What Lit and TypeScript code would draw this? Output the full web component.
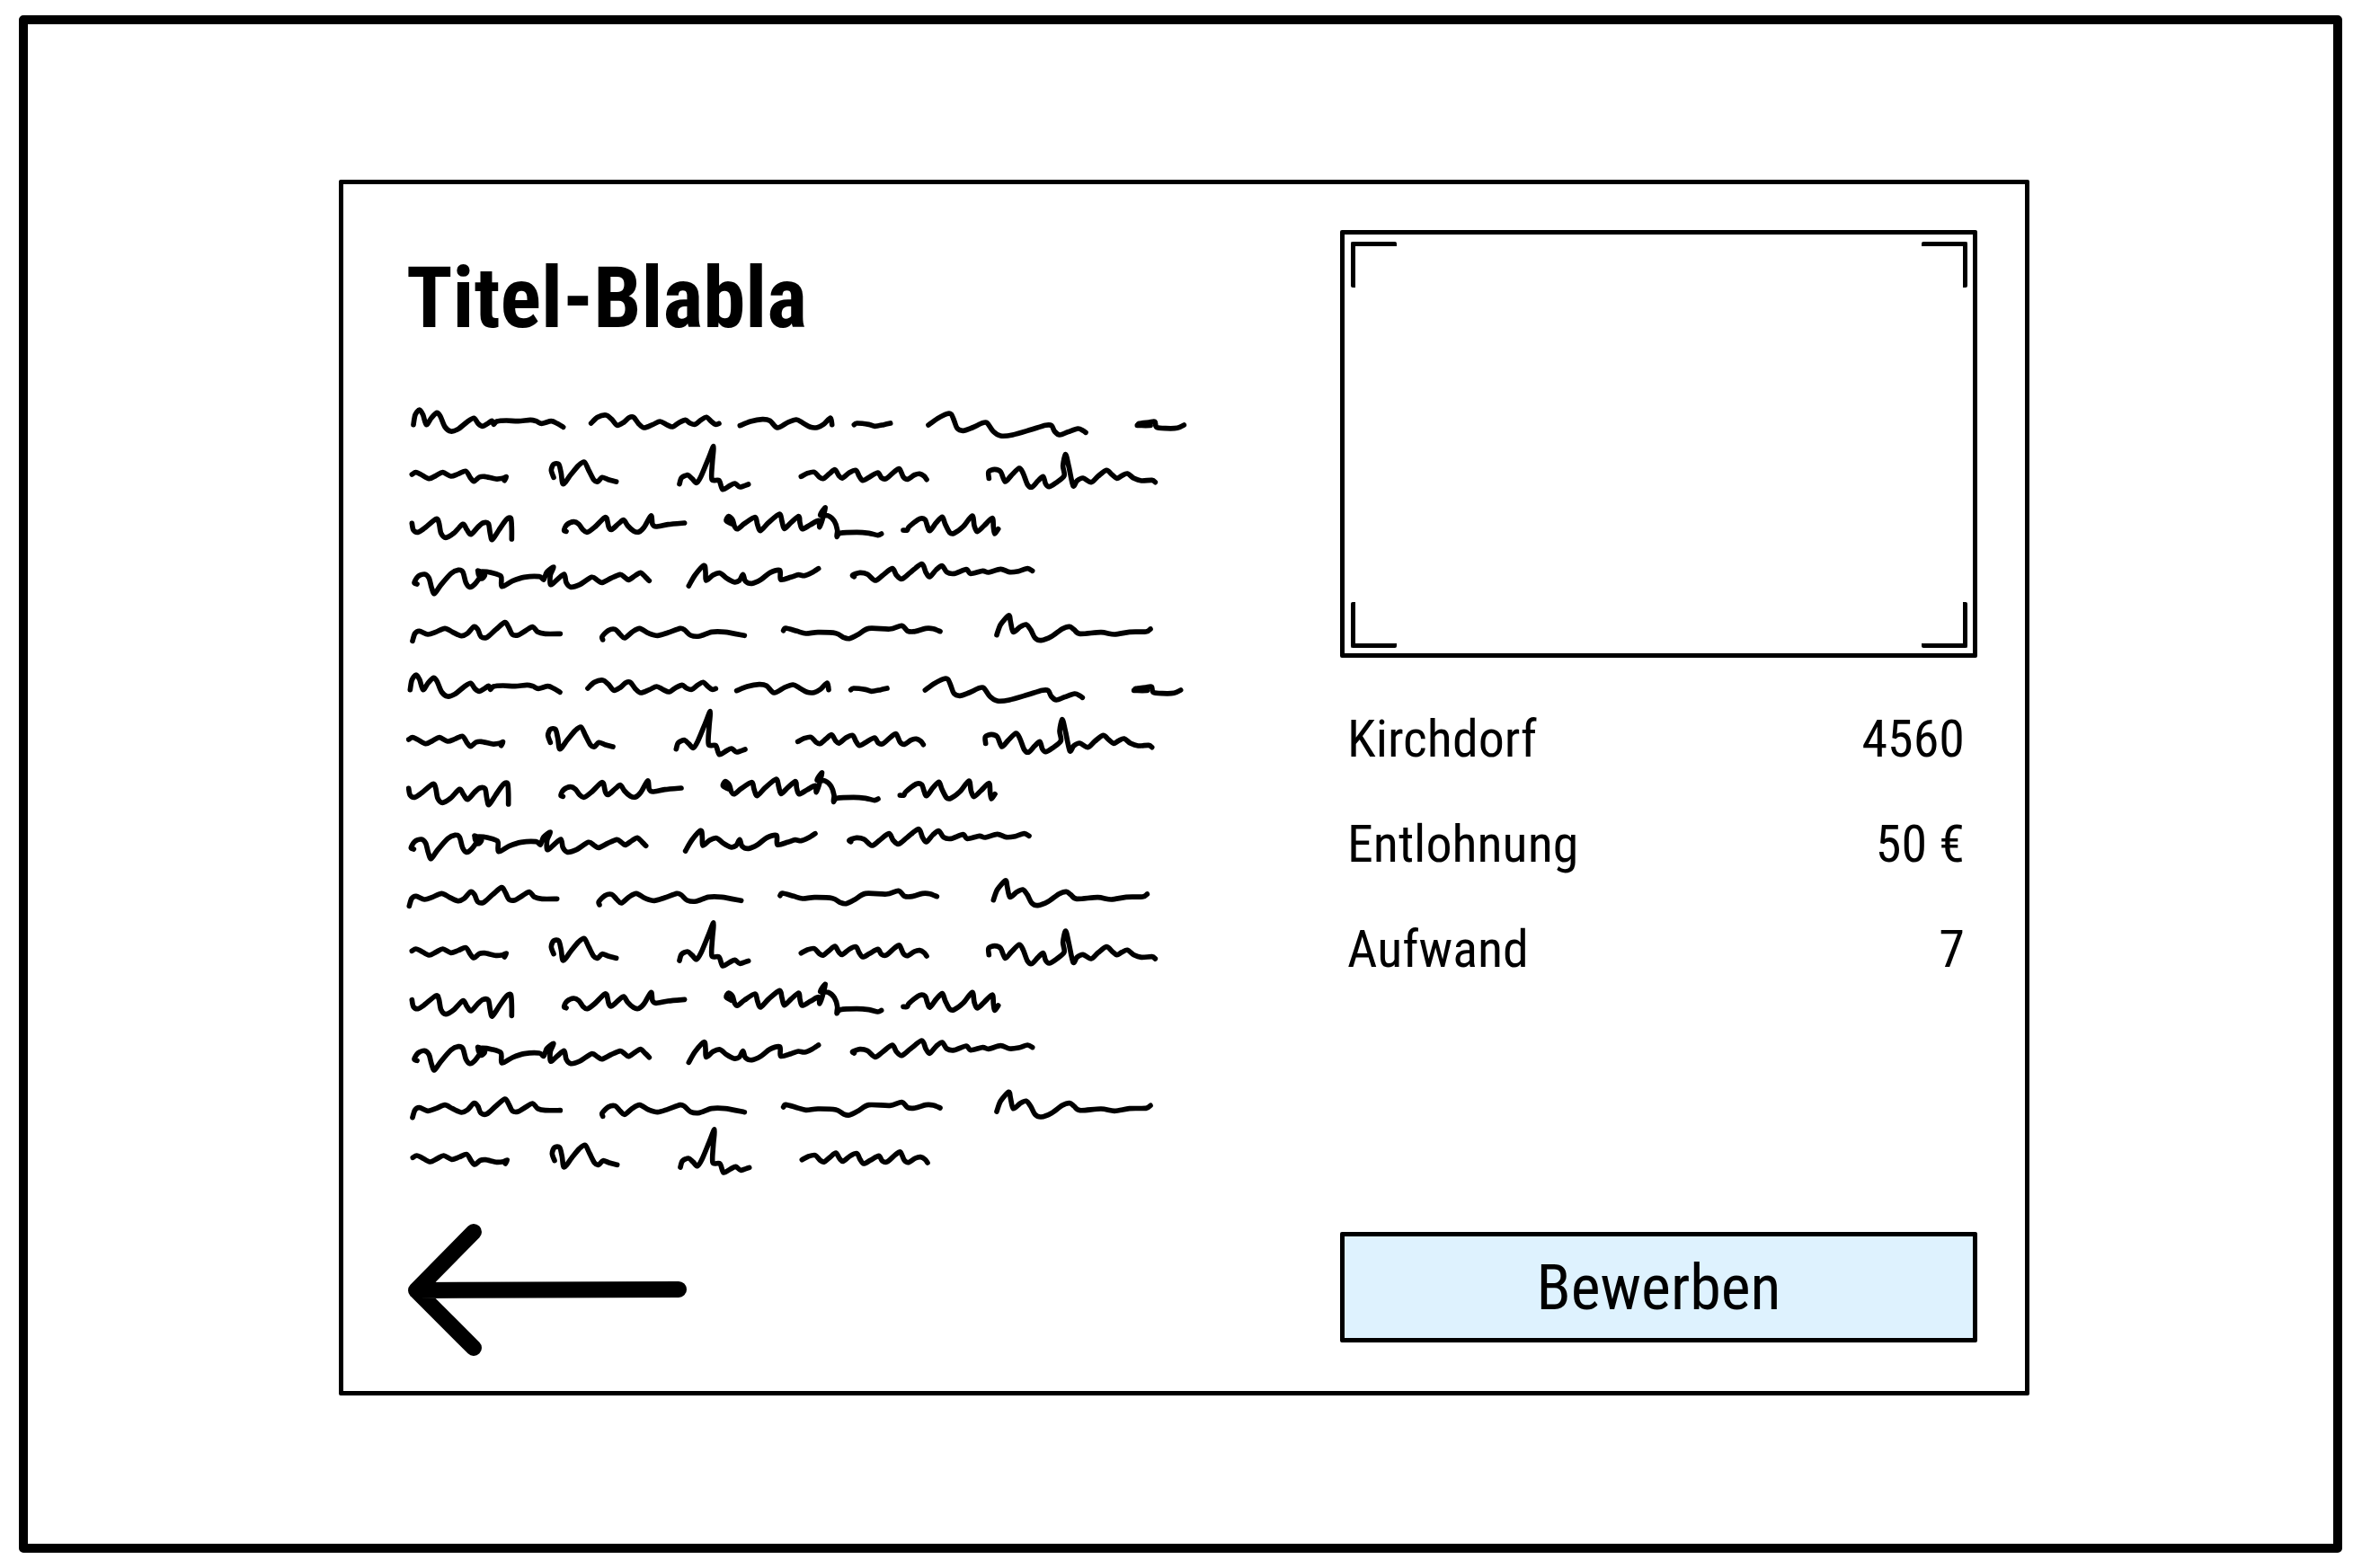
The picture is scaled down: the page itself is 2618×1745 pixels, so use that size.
import { LitElement, html, svg, css } from "lit";
import { customElement } from "lit/decorators.js";

type Word = { dx?: number; pts: string };

// Scribbled placeholder words, one array per line of text.
const LINE_A: Word[] = [
  { pts: "60,128 66,95 80,78 92,95 103,128 120,105 138,88 150,100 165,135 185,150 210,142 240,118 262,106 276,124 291,133 308,124 322,115 328,127 338,117 370,114 410,116 450,112 470,116 488,124 520,116 540,124 560,136" },
  { pts: "653,123 675,103 703,96 722,110 740,130 762,120 780,104 795,103 812,125 830,138 858,128 883,117 905,128 925,135 945,122 968,112 982,122 1000,127 1020,112 1038,103 1055,118 1068,127 1080,124" },
  { pts: "1150,131 1185,117 1225,110 1250,115 1275,138 1310,120 1338,111 1360,122 1385,136 1408,137 1430,126 1452,105 1457,128" },
  { dx: 1320, pts: "211,128 220,123 260,127 280,133 310,128 332,123" },
  { dx: 1320, pts: "459,129 490,107 520,92 535,93 545,115 555,140 575,148 605,138 640,122 655,122 675,150 700,165 740,162 800,145 850,130 870,131 880,150 897,162 925,152 958,141 975,148 984,154" },
  { dx: 1320, pts: "1156,130 1200,131 1160,125 1195,120 1215,118 1220,136 1250,140 1290,139 1312,129" },
];
const LINE_B: Word[] = [
  { pts: "55,294 68,287 85,294 112,308 135,298 158,287 185,300 210,292 235,283 250,305 262,317 280,303 298,301 335,309 358,307 370,302 364,314" },
  { pts: "528,304 520,280 528,260 545,260 553,290 560,326 585,295 610,265 630,252 645,280 662,312 675,318 690,304 710,311 737,318" },
  { pts: "948,326 955,305 975,296 990,308 1005,322 1020,300 1045,240 1062,200 1058,250 1056,310 1080,314 1092,344 1115,332 1133,324 1150,336 1178,327" },
  { dx: 1320, pts: "34,301 55,290 78,286 95,303 108,308 128,292 147,278 160,298 172,306 195,288 217,280 228,300 240,314 262,303 290,288 302,305 318,308 345,285 362,275 375,302 390,310 412,296 430,292 445,300 453,311" },
  { dx: 1320, pts: "661,307 660,285 680,277 700,285 715,318 735,298 762,273 775,290 790,328 805,336 825,315 842,301 850,325 862,335 885,322 912,298 908,265 917,227 928,270 942,332 955,315 975,306 1002,320 1025,300 1053,280 1072,295 1088,307 1105,298 1123,291 1145,307 1170,315 1205,313 1216,320" },
];
const LINE_C: Word[] = [
  { pts: "55,457 60,480 75,487 95,475 135,443 145,455 152,490 168,505 195,490 225,460 238,478 252,494 275,470 292,456 310,458 316,490 323,512 345,480 370,445 385,440 388,475 388,510" },
  { pts: "570,484 563,480 572,462 595,452 612,460 625,478 640,487 665,470 695,440 705,440 712,470 722,478 745,458 762,446 775,465 795,483 812,486 830,470 853,432 858,460 870,468 910,461 965,456" },
  { pts: "1120,458 1104,448 1112,434 1125,445 1132,468 1142,476 1165,458 1200,437 1208,460 1218,482 1245,455 1282,426 1290,450 1298,475 1320,455 1346,434 1350,455 1358,476 1385,462 1412,448 1416,470 1425,445 1435,405 1418,430 1445,432 1465,450 1475,480 1473,502 1485,490 1540,487 1580,490 1610,497 1622,492" },
  { dx: 1320, pts: "375,480 388,480 395,468 430,442 448,445 455,465 464,482 485,455 505,436 515,460 530,488 545,490 575,468 605,432 612,465 622,485 645,465 672,440 676,470 680,492 692,476" },
];
const LINE_D: Word[] = [
  { pts: "72,660 63,655 75,635 97,627 112,640 120,670 130,692 150,665 185,625 210,613 225,620 235,655 248,670 265,660 285,630 275,615 298,630 286,642 276,622 290,618 320,622 352,634 355,668 390,650 430,637 480,635 495,645 505,620 528,603 517,630 518,662 540,645 563,627 570,655 585,670 615,662 655,637 675,648 690,655 720,640 750,628 765,637 778,646 800,632 818,622 835,637 847,649" },
  { pts: "979,666 1000,630 1030,598 1035,620 1037,648 1060,630 1083,623 1105,640 1130,653 1148,648 1160,628 1168,650 1190,658 1220,645 1250,622 1283,614 1286,645 1320,637 1345,629 1365,632 1390,622 1412,608" },
  { dx: 1320, pts: "211,635 206,630 230,622 255,627 281,648 305,632 338,608 352,630 370,643 400,620 437,593 450,620 463,636 485,612 505,599 520,620 545,625 585,611 600,625 640,616 660,621 700,610 730,620 760,617 790,608 806,616" },
];
const LINE_E: Word[] = [
  { pts: "57,850 65,825 80,817 108,828 135,820 165,808 190,820 220,833 240,825 262,802 275,812 285,835 305,838 335,812 365,788 378,805 390,828 410,830 435,815 458,803 475,820 500,826 550,826" },
  { pts: "692,846 690,835 710,815 733,811 750,828 765,840 790,820 815,808 845,824 875,832 910,822 950,808 965,813 985,831 1015,834 1055,820 1100,820 1165,832" },
  { pts: "1295,815 1303,807 1340,817 1370,825 1410,821 1470,824 1495,838 1515,842 1545,828 1580,808 1650,810 1690,799 1710,817 1735,818 1770,808 1795,809 1818,818" },
  { dx: 1320, pts: "687,830 700,795 727,765 733,785 742,820 765,803 785,795 800,812 815,840 835,848 870,835 905,810 930,802 945,812 965,826 1035,821 1080,828 1130,820 1185,819 1200,810" },
];

// The paragraph: which line is drawn, and where its block starts.
const PARAGRAPH: { words: Word[]; x: number; y: number }[] = [
  { words: LINE_A, x: 0, y: 0 },
  { words: LINE_B, x: 0, y: 0 },
  { words: LINE_C, x: 0, y: 0 },
  { words: LINE_D, x: 0, y: 0 },
  { words: LINE_E, x: 0, y: 0 },
  { words: LINE_A, x: -11, y: 885 },
  { words: LINE_B, x: -11, y: 885 },
  { words: LINE_C, x: -11, y: 885 },
  { words: LINE_D, x: -11, y: 885 },
  { words: LINE_E, x: -11, y: 885 },
  { words: LINE_B, x: 0, y: 1591 },
  { words: LINE_C, x: 0, y: 1591 },
  { words: LINE_D, x: 0, y: 1591 },
  { words: LINE_E, x: 0, y: 1591 },
  { words: LINE_B.slice(0, 4), x: 3, y: 2281 },
];

// Runs a rounded pen line through the listed points.
function penPath(word: Word): string {
  const p = word.pts.split(" ").map((s) => {
    const [x, y] = s.split(",").map(Number);
    return [x + (word.dx ?? 0), y];
  });
  let d = `M${p[0][0]} ${p[0][1]}`;
  for (let i = 0; i < p.length - 1; i++) {
    const a = p[Math.max(i - 1, 0)];
    const b = p[i];
    const c = p[i + 1];
    const e = p[Math.min(i + 2, p.length - 1)];
    const r = (n: number) => Math.round(n * 10) / 10;
    d += `C${r(b[0] + (c[0] - a[0]) / 7)} ${r(b[1] + (c[1] - a[1]) / 7)} ${r(c[0] - (e[0] - b[0]) / 7)} ${r(c[1] - (e[1] - b[1]) / 7)} ${c[0]} ${c[1]}`;
  }
  return d;
}

@customElement("scribble-text")
class ScribbleText extends LitElement {
  static styles = css`
    :host {
      display: block;
    }
    .lines {
      display: block;
      width: 100%;
      fill: none;
      stroke: #000;
      stroke-width: 17;
      stroke-linecap: round;
      stroke-linejoin: round;
    }
  `;
  render() {
    return html`<svg class="lines" viewBox="36 30 2610 2610" aria-hidden="true">
      ${PARAGRAPH.map(
        (row) => svg`<g transform="translate(${row.x} ${row.y})">
          ${row.words.map((w) => svg`<path d=${penPath(w)}></path>`)}
        </g>`
      )}
    </svg>`;
  }
}

@customElement("app-root")
class AppRoot extends LitElement {
  static styles = css`
    :host {
      display: block;
      font-family: "Roboto Condensed", "Liberation Sans Narrow", "DejaVu Sans Condensed", sans-serif;
      color: #000;
      background: #fff;
    }
    * {
      box-sizing: border-box;
    }
    .page {
      display: flex;
      min-height: 100vh;
      padding: 17px 12px 17px 21px;
    }
    .screen {
      flex: 1;
      border: 10px solid #000;
      border-radius: 5px;
      padding: 173px 338px 165px 346px;
    }
    .card {
      display: grid;
      grid-template-columns: 870fr 709fr;
      column-gap: 169px;
      min-height: 100%;
      border: 5px solid #000;
      border-radius: 2px;
      padding: 51px 53px 39px 70px;
    }
    .text {
      display: flex;
      flex-direction: column;
    }
    .title {
      margin: 12px 0 44px;
      font-size: 95px;
      line-height: 128px;
      font-weight: 700;
    }
    .back {
      display: block;
      width: 312px;
      margin-top: auto;
    }
    .arrow {
      display: block;
      width: 100%;
      fill: none;
      stroke: #000;
      stroke-width: 18;
      stroke-linecap: round;
      stroke-linejoin: round;
    }
    .side {
      display: flex;
      flex-direction: column;
      padding-bottom: 15px;
    }
    .photo {
      display: grid;
      grid-template-columns: 51px 51px;
      grid-template-rows: 51px 51px;
      place-content: space-between;
      aspect-ratio: 709 / 476;
      border: 5px solid #000;
      border-radius: 2px;
      padding: 8px 6px 6px 7px;
    }
    .corner {
      border: 0 solid #000;
      border-radius: 2px;
    }
    .tl {
      border-width: 5px 0 0 5px;
    }
    .tr {
      border-width: 5px 5px 0 0;
    }
    .bl {
      border-width: 0 0 5px 5px;
    }
    .br {
      border-width: 0 5px 5px 0;
    }
    .facts {
      margin: 32px 14px 0 8px;
      font-size: 58px;
      line-height: 117px;
    }
    .fact {
      display: flex;
      justify-content: space-between;
    }
    .value {
      margin: 0;
    }
    .apply {
      margin-top: auto;
      height: 123px;
      border: 5px solid #000;
      border-radius: 2px;
      padding: 0;
      background: #def2fe;
      color: inherit;
      font: inherit;
      font-size: 70px;
      line-height: 84px;
    }
  `;

  private facts = [
    ["Kirchdorf", "4560"],
    ["Entlohnung", "50 €"],
    ["Aufwand", "7"],
  ];

  render() {
    return html`<div class="page">
      <main class="screen">
        <article class="card">
          <section class="text">
            <h1 class="title">Titel-Blabla</h1>
            <scribble-text></scribble-text>
            <a class="back" href="#" aria-label="Zurück">
              <svg class="arrow" viewBox="0 0 312 148" aria-hidden="true">
                <path d="M75 10L11 75L75 139M11 75L303 74"></path>
              </svg>
            </a>
          </section>
          <section class="side">
            <div class="photo">
              <span class="corner tl"></span><span class="corner tr"></span>
              <span class="corner bl"></span><span class="corner br"></span>
            </div>
            <dl class="facts">
              ${this.facts.map(
                ([label, value]) => html`<div class="fact">
                  <dt>${label}</dt>
                  <dd class="value">${value}</dd>
                </div>`
              )}
            </dl>
            <button class="apply" type="button">Bewerben</button>
          </section>
        </article>
      </main>
    </div>`;
  }
}
